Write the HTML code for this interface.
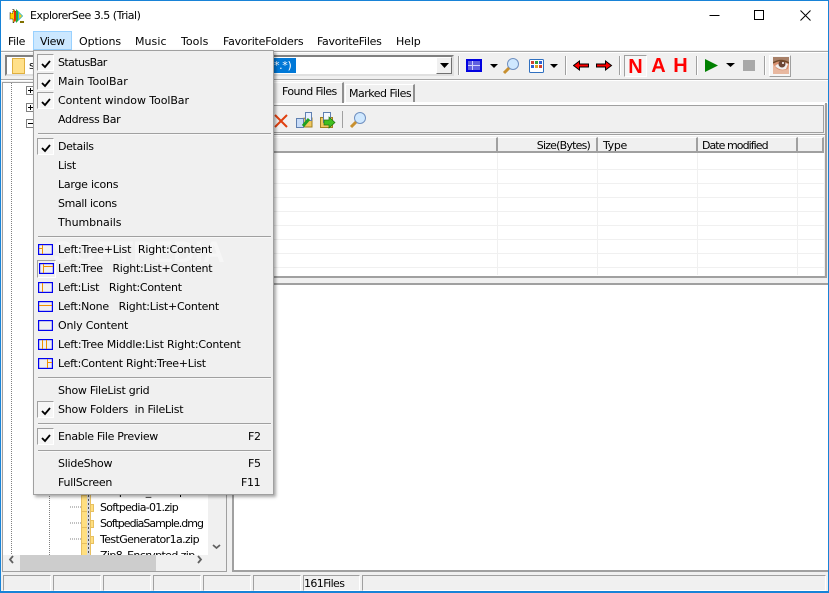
<!DOCTYPE html>
<html><head><meta charset="utf-8"><style>
*{box-sizing:border-box}
html,body{margin:0;padding:0}
body{width:829px;height:593px;overflow:hidden;position:relative;background:#f0f0f0;font:11px "DejaVu Sans",sans-serif;letter-spacing:-.35px;color:#000}
div,span.a{position:absolute}
.t{white-space:pre;line-height:14px;height:14px}
.m{position:absolute;white-space:pre;line-height:14px;left:24px}
.sep{position:absolute;left:4px;width:233px;height:2px;background:#a0a0a0;border-bottom:1px solid #f8f8f8}
.chk{position:absolute;left:3px;width:17px;height:17px;border:1px solid;border-color:#a0a0a0 #fff #fff #a0a0a0;background:#f6f6f6}
.chk svg{position:absolute;left:3px;top:4px}
.s{position:absolute;top:575px;height:16px;border:1px solid;border-color:#a0a0a0 #fff #fff #a0a0a0}
.h{position:absolute;top:137px;height:16px;border-right:2px solid #a0a0a0;border-bottom:2px solid #a0a0a0;border-top:1px solid #fff;background:#f0f0f0;line-height:16px;white-space:pre}
.vl{position:absolute;width:1px;background:#f0f0f0;top:153px;height:122px}
.hl{position:absolute;left:234px;width:590px;height:1px;background:#f0f0f0}
.dv{position:absolute;width:2px;background:#a0a0a0;border-right:1px solid #fff}
.lay{position:absolute;left:4px}
</style></head><body>
<!-- title / menu -->
<div style="left:0;top:0;width:829px;height:50px;background:#fff"></div>
<svg style="position:absolute;left:9px;top:7px" width="18" height="18" viewBox="0 0 18 18"><path d="M1 6h3V2l7.500 7-7.500 7v-4H1z" fill="#ffd000" stroke="#000" stroke-width=".8" stroke-dasharray="1 1"/><path d="M5 3l6.500 6L5 15z" fill="#e83000"/><path d="M7 2l7 7-7 7z" fill="#20b040"/><path d="M9 4l5 5-5 5z" fill="#30b8e0"/><path d="M10 6l3 3-3 3z" fill="#f0d020"/><rect x="11" y="14" width="4" height="2" fill="#807000"/></svg>
<div class="t" style="left:30px;top:9px;letter-spacing:-.5px">ExplorerSee 3.5 (Trial)</div>
<svg style="position:absolute;left:700px;top:0" width="129" height="31"><path d="M9.500 15.500h10M54.500 10.500h9v9h-9zM100.500 10.500l10 10M110.500 10.500l-10 10" fill="none" stroke="#000"/></svg>
<div style="left:33px;top:31px;width:39px;height:19px;background:#cce8ff;border:1px solid #99d1ff"></div>
<div class="t" style="left:8px;top:35px">File</div>
<div class="t" style="left:40px;top:35px">View</div>
<div class="t" style="left:79px;top:35px;letter-spacing:-.05px">Options</div>
<div class="t" style="left:135px;top:35px;letter-spacing:.05px">Music</div>
<div class="t" style="left:181px;top:35px;letter-spacing:.05px">Tools</div>
<div class="t" style="left:223px;top:35px;letter-spacing:-.22px">FavoriteFolders</div>
<div class="t" style="left:317px;top:35px;letter-spacing:-.27px">FavoriteFiles</div>
<div class="t" style="left:396px;top:35px;letter-spacing:-.1px">Help</div>

<!-- toolbar band -->
<div style="left:1px;top:51px;width:827px;height:2px;background:#a8a8a8;border-bottom:1px solid #fff"></div>
<div style="left:1px;top:79px;width:827px;height:2px;background:#a8a8a8;border-bottom:1px solid #fff"></div>
<div style="left:5px;top:55px;width:449px;height:21px;background:#fff;border:2px solid;border-color:#808080 #e0e0e0 #e0e0e0 #808080"></div>
<div style="left:12px;top:58px;width:13px;height:16px;background:#ffe08a;border:1px solid #e0b040"></div>
<div class="t" style="left:29px;top:59px">s</div>
<div style="left:270px;top:58px;width:26px;height:15px;background:#0078d7;color:#fff;line-height:15px;padding-left:4px">*.*)</div>
<div style="left:436px;top:57px;width:16px;height:17px;background:#f0f0f0;border:1px solid;border-color:#fff #707070 #707070 #fff"></div>
<svg style="position:absolute;left:440px;top:63px" width="9" height="5"><path d="M0 0h9L4.500 5z" fill="#000"/></svg>
<div class="dv" style="left:458px;top:56px;height:19px"></div>
<svg style="position:absolute;left:466px;top:58px" width="100" height="18" viewBox="0 0 100 18">
<rect x="1" y="2" width="14" height="11" fill="#6060e0" stroke="#0000e0" stroke-width="2"/><path d="M2 7.500h12M6.500 3v9" stroke="#d0d0ff"/>
<path d="M24 6h8l-4 4z" fill="#000"/>
<circle cx="47" cy="6" r="5.500" fill="#cfe8ff" stroke="#7090c0"/><path d="M43 10l-5 5" stroke="#c89030" stroke-width="3"/>
<rect x="63.500" y="1.500" width="14" height="13" rx="1" fill="#fff" stroke="#3070c0"/><rect x="65" y="3" width="3" height="3" fill="#d04030"/><rect x="69" y="3" width="3" height="3" fill="#30a040"/><rect x="73" y="3" width="3" height="3" fill="#3060d0"/><rect x="65" y="7" width="3" height="3" fill="#3060d0"/><rect x="69" y="7" width="3" height="3" fill="#e0a020"/><rect x="73" y="7" width="3" height="3" fill="#d04030"/>
<path d="M84 6h8l-4 4z" fill="#000"/></svg>
<div class="dv" style="left:565px;top:56px;height:19px"></div>
<svg style="position:absolute;left:573px;top:59px" width="44" height="14"><path d="M.5 6.500l6-4.500v3h9v3h-9v3z" fill="#f00" stroke="#000"/><path d="M38.500 6.500l-6-4.500v3h-9v3h9v3z" fill="#f00" stroke="#000"/></svg>
<div class="dv" style="left:619px;top:56px;height:19px"></div>
<div style="left:624px;top:55px;width:23px;height:22px;border:1px solid;border-color:#a0a0a0 #fff #fff #a0a0a0;background:#f6f6f6"></div>
<div style="left:624px;top:56px;width:23px;text-align:center;font:bold 20px/22px 'Liberation Sans',sans-serif;color:#f00;letter-spacing:0">N</div>
<div style="left:647px;top:55px;width:23px;text-align:center;font:bold 20px/22px 'Liberation Sans',sans-serif;color:#f00;letter-spacing:0">A</div>
<div style="left:669px;top:55px;width:23px;text-align:center;font:bold 20px/22px 'Liberation Sans',sans-serif;color:#f00;letter-spacing:0">H</div>
<div class="dv" style="left:696px;top:56px;height:19px"></div>
<svg style="position:absolute;left:704px;top:58px" width="56" height="16"><path d="M1 1l13 6.500L1 14z" fill="#008000"/><path d="M22 5h9l-4.500 4z" fill="#000"/><rect x="39" y="2" width="12" height="11" fill="#a8a8a8"/></svg>
<div class="dv" style="left:764px;top:56px;height:19px"></div>
<div style="left:769px;top:55px;width:22px;height:22px;border:1px solid;border-color:#fff #a0a0a0 #a0a0a0 #fff;background:#f6f6f6"></div>
<svg style="position:absolute;left:773px;top:57px" width="16" height="17"><rect width="16" height="17" fill="#e8b8a0"/><path d="M0 0h16v7Q8 2 0 6z" fill="#a88068"/><path d="M0 7q7-5 16 0l-1 5q-7 3-12-1z" fill="#d89070"/><path d="M2 9q6-5 13-2l-2 5q-6 2-11-3z" fill="#f0f0f0"/><circle cx="9" cy="7" r="3.500" fill="#6b4636"/><circle cx="10" cy="6" r="1" fill="#fff"/><path d="M0 6q8-5 16 0" stroke="#704828" stroke-width="1.500" fill="none"/></svg>

<!-- left tree -->
<div style="left:2px;top:82px;width:225px;height:490px;background:#fff;border:1px solid #a0a0a0"></div>
<div style="left:208px;top:83px;width:18px;height:472px;background:#f0f0f0"></div>
<div style="left:3px;top:555px;width:223px;height:16px;background:#f0f0f0"></div>
<div style="left:20px;top:555px;width:136px;height:16px;background:#cdcdcd"></div>
<svg style="position:absolute;left:0;top:82px" width="229" height="490" fill="none">
<path d="M11.500 1v472M49.500 410v63" stroke="#808080" stroke-dasharray="1 1"/>
<path d="M70 425h11M70 441h11M70 457h11" stroke="#808080" stroke-dasharray="1 1"/>
<path d="M13 474l-3 3.500 3 3.500M198 474l3 3.500-3 3.500M213 463l3.500 3 3.500-3" stroke="#606060" stroke-width="1.800"/>
<path d="M26.500 4.500h8v8h-8zM26.500 21.500h8v8h-8zM26.500 37.500h8v8h-8z" fill="#fff" stroke="#808080"/>
<path d="M28 8.500h5M30.500 6v5M28 25.500h5M30.500 23v5M28 41.500h5" stroke="#000"/></svg>
<svg style="position:absolute;left:81px;top:495px" width="13" height="60"><g fill="#ffdf80" stroke="#e8c060"><path d="M.5 .5h9v16h-9zM.5 16.500h9v16h-9zM.5 32.500h9v16h-9zM.5 48.500h9v12h-9z"/><path d="M9.500 9.500h3v7h-3zM9.500 25.500h3v7h-3zM9.500 41.500h3v7h-3z"/></g><rect x="6" width="3" height="60" fill="#d8d8d8"/><path d="M7.500 0v60" stroke="#505050" stroke-width="1" stroke-dasharray="2 2"/></svg>
<div class="t" style="left:100px;top:485px;letter-spacing:-.72px">Softpedia_test.zip</div>
<div class="t" style="left:100px;top:501px;letter-spacing:-.72px">Softpedia-01.zip</div>
<div class="t" style="left:100px;top:517px;letter-spacing:-.98px">SoftpediaSample.dmg</div>
<div class="t" style="left:100px;top:533px;letter-spacing:-.61px">TestGenerator1a.zip</div>
<div style="left:100px;top:549px;height:6px;overflow:hidden;line-height:14px;white-space:pre;width:100px;letter-spacing:-.6px">Zip8_Encrypted.zip</div>

<!-- right: tabs -->
<div style="left:232px;top:102px;width:596px;height:2px;background:#fff"></div>
<div style="left:274px;top:82px;width:70px;height:21px;background:#f0f0f0;border-right:2px solid #909090;border-top:1px solid #fff;line-height:18px;padding-left:8px;white-space:pre;letter-spacing:-.6px">Found Files</div>
<div style="left:345px;top:84px;width:70px;height:18px;background:#f0f0f0;border-top:1px solid #fff;border-left:1px solid #fff;border-right:2px solid #909090;line-height:17px;padding-left:3px;white-space:pre;letter-spacing:-.5px">Marked Files</div>
<div style="left:232px;top:104px;width:592px;height:1px;background:#fff"></div>
<div style="left:232px;top:105px;width:592px;height:28px;border:1px solid #a0a0a0;border-left:0"></div>
<svg style="position:absolute;left:274px;top:111px" width="92" height="20" fill="none"><path d="M1 4l12 12M13 4L1 16" stroke="#e04010" stroke-width="2"/>
<path d="M24 8l8-1h6v9H26z" fill="#f0c860" stroke="#a08020"/><path d="M22.500 7.500h7v9h-7z" fill="#c8dcf8" stroke="#6080b0"/><path d="M31.500 1.500h6v8h-6z" fill="#e8f0ff" stroke="#6080b0"/><path d="M29 15l6-7" stroke="#20a020" stroke-width="3"/>
<path d="M46.500 6.500h12v10h-12z" fill="#f0c860" stroke="#a08020"/><path d="M49.500 1.500h7v10h-7z" fill="#f4f8ff" stroke="#6080b0"/><path d="M50 9h5V6l6 5.500-6 5.500v-3h-5z" fill="#40c020" stroke="#207010" stroke-width=".7"/>
<path d="M68.500 0v17" stroke="#a0a0a0"/>
<circle cx="86" cy="7" r="5.500" fill="#cfe8ff" stroke="#7090c0"/><path d="M82 11l-5 5" stroke="#c89030" stroke-width="3"/></svg>

<!-- list -->
<div style="left:232px;top:134px;width:594px;height:2px;background:#a0a0a0;border-bottom:1px solid #fff"></div>
<div style="left:232px;top:153px;width:592px;height:123px;background:#fff"></div>
<div class="h" style="left:232px;width:266px"></div>
<div class="h" style="left:498px;width:100px;text-align:right;padding-right:6px;letter-spacing:-.8px">Size(Bytes)</div>
<div class="h" style="left:598px;width:100px;padding-left:5px">Type</div>
<div class="h" style="left:698px;width:100px;padding-left:4px;letter-spacing:-.95px">Date modified</div>
<div class="h" style="left:798px;width:26px"></div>
<div class="vl" style="left:497px"></div><div class="vl" style="left:597px"></div><div class="vl" style="left:697px"></div><div class="vl" style="left:797px"></div>
<div class="hl" style="top:169px"></div><div class="hl" style="top:183px"></div><div class="hl" style="top:197px"></div><div class="hl" style="top:211px"></div><div class="hl" style="top:225px"></div><div class="hl" style="top:239px"></div><div class="hl" style="top:253px"></div><div class="hl" style="top:267px"></div>
<div style="left:825px;top:103px;width:2px;height:175px;background:#a0a0a0"></div>
<div style="left:232px;top:276px;width:595px;height:2px;background:#a0a0a0"></div>
<!-- lower pane -->
<div style="left:232px;top:283px;width:597px;height:289px;background:#fff;border-top:2px solid #a0a0a0;border-left:2px solid #a0a0a0;border-bottom:2px solid #a0a0a0"></div>

<!-- status -->
<div class="s" style="left:3px;width:48px"></div><div class="s" style="left:53px;width:48px"></div><div class="s" style="left:103px;width:48px"></div><div class="s" style="left:153px;width:48px"></div><div class="s" style="left:203px;width:48px"></div><div class="s" style="left:253px;width:48px"></div>
<div class="s" style="left:303px;width:57px;line-height:15px;letter-spacing:-.6px">161Files</div>
<div class="s" style="left:362px;width:464px"></div>

<!-- window border -->
<div style="left:0;top:0;width:829px;height:593px;border:1px solid #1883d7;border-bottom-width:2px;z-index:5"></div>

<!-- dropdown -->
<div style="left:33px;top:50px;width:241px;height:445px;background:#f0f0f0;border:1px solid #a0a0a0;box-shadow:2px 2px 3px rgba(0,0,0,.35);z-index:6">
<div style="left:19px;top:185px;font:bold 30px 'Liberation Sans',sans-serif;color:#f6f6f6;letter-spacing:0;white-space:pre">SOFTPEDIA</div>
<div class="chk" style="top:3px"><svg width="10" height="10"><path d="M1 5l3 3 5-6" fill="none" stroke="#000" stroke-width="1.800"/></svg></div>
<div class="chk" style="top:22px"><svg width="10" height="10"><path d="M1 5l3 3 5-6" fill="none" stroke="#000" stroke-width="1.800"/></svg></div>
<div class="chk" style="top:41px"><svg width="10" height="10"><path d="M1 5l3 3 5-6" fill="none" stroke="#000" stroke-width="1.800"/></svg></div>
<div class="m" style="top:5px;letter-spacing:-.57px">StatusBar</div>
<div class="m" style="top:24px;letter-spacing:-.02px">Main ToolBar</div>
<div class="m" style="top:43px;letter-spacing:-.08px">Content window ToolBar</div>
<div class="m" style="top:62px">Address Bar</div>
<div class="sep" style="top:82px"></div>
<div class="chk" style="top:87px"><svg width="10" height="10"><path d="M1 5l3 3 5-6" fill="none" stroke="#000" stroke-width="1.800"/></svg></div>
<div class="m" style="top:89px">Details</div>
<div class="m" style="top:108px">List</div>
<div class="m" style="top:127px;letter-spacing:-.25px">Large icons</div>
<div class="m" style="top:146px">Small icons</div>
<div class="m" style="top:165px;letter-spacing:-.05px">Thumbnails</div>
<div class="sep" style="top:185px"></div>
<svg class="lay" style="top:193px" width="15" height="11"><rect x=".5" y=".5" width="14" height="10" fill="none" stroke="#0000f0" stroke-width="1.400"/><path d="M4.500 1v9M1 4.500h3" stroke="#f09000"/></svg>
<div style="position:absolute;left:3px;top:209px;width:19px;height:18px;border:1px solid;border-color:#a0a0a0 #fff #fff #a0a0a0"></div>
<svg class="lay" style="top:212px;left:5px" width="15" height="11"><rect x=".5" y=".5" width="14" height="10" fill="none" stroke="#0000f0" stroke-width="1.400"/><path d="M4.500 1v9M5 3.500h9" stroke="#f09000"/></svg>
<svg class="lay" style="top:231px" width="15" height="11"><rect x=".5" y=".5" width="14" height="10" fill="none" stroke="#0000f0" stroke-width="1.400"/><path d="M4.500 1v9" stroke="#f09000"/></svg>
<svg class="lay" style="top:250px" width="15" height="11"><rect x=".5" y=".5" width="14" height="10" fill="none" stroke="#0000f0" stroke-width="1.400"/><path d="M1 4.500h13" stroke="#f09000"/></svg>
<svg class="lay" style="top:269px" width="15" height="11"><rect x=".5" y=".5" width="14" height="10" fill="none" stroke="#0000f0" stroke-width="1.400"/></svg>
<svg class="lay" style="top:288px" width="15" height="11"><rect x=".5" y=".5" width="14" height="10" fill="none" stroke="#0000f0" stroke-width="1.400"/><path d="M4.500 1v9M8.500 1v9" stroke="#f09000"/></svg>
<svg class="lay" style="top:307px" width="15" height="11"><rect x=".5" y=".5" width="14" height="10" fill="none" stroke="#0000f0" stroke-width="1.400"/><path d="M9.500 1v9M10 4.500h4" stroke="#f09000"/></svg>
<div class="m" style="top:192px;letter-spacing:-.18px">Left:Tree+List  Right:Content</div>
<div class="m" style="top:211px;letter-spacing:-.28px">Left:Tree   Right:List+Content</div>
<div class="m" style="top:230px;letter-spacing:-.27px">Left:List   Right:Content</div>
<div class="m" style="top:249px;letter-spacing:-.25px">Left:None   Right:List+Content</div>
<div class="m" style="top:268px;letter-spacing:-.19px">Only Content</div>
<div class="m" style="top:287px;letter-spacing:-.21px">Left:Tree Middle:List Right:Content</div>
<div class="m" style="top:306px;letter-spacing:-.28px">Left:Content Right:Tree+List</div>
<div class="sep" style="top:326px"></div>
<div class="m" style="top:333px;letter-spacing:-.25px">Show FileList grid</div>
<div class="chk" style="top:350px"><svg width="10" height="10"><path d="M1 5l3 3 5-6" fill="none" stroke="#000" stroke-width="1.800"/></svg></div>
<div class="m" style="top:352px;letter-spacing:-.23px">Show Folders  in FileList</div>
<div class="sep" style="top:372px"></div>
<div class="chk" style="top:377px"><svg width="10" height="10"><path d="M1 5l3 3 5-6" fill="none" stroke="#000" stroke-width="1.800"/></svg></div>
<div class="m" style="top:379px;letter-spacing:-.3px">Enable File Preview</div>
<div class="m" style="top:379px;left:214px">F2</div>
<div class="sep" style="top:399px"></div>
<div class="m" style="top:406px;letter-spacing:-.25px">SlideShow</div>
<div class="m" style="top:406px;left:214px">F5</div>
<div class="m" style="top:425px;letter-spacing:-.25px">FullScreen</div>
<div class="m" style="top:425px;left:207px">F11</div>
</div>
</body></html>
